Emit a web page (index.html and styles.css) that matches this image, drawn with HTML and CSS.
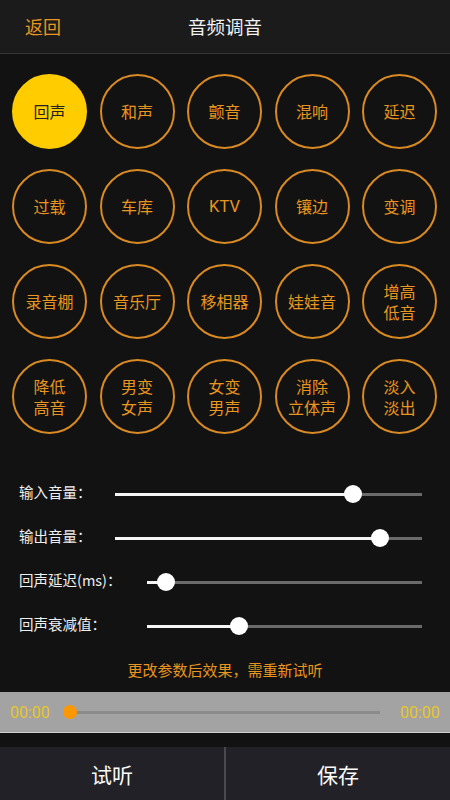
FILE: index.html
```html
<!DOCTYPE html>
<html lang="zh-CN">
<head>
<meta charset="utf-8">
<title>音频调音</title>
<link rel="stylesheet" href="styles.css">
</head>
<body>
<div class="app">
  <header class="topbar">
    <span class="back">返回</span>
    <span class="title">音频调音</span>
  </header>

  <section class="effects">
    <div class="fx active">回声</div>
    <div class="fx">和声</div>
    <div class="fx">颤音</div>
    <div class="fx">混响</div>
    <div class="fx">延迟</div>
    <div class="fx">过载</div>
    <div class="fx">车库</div>
    <div class="fx latin">KTV</div>
    <div class="fx">镶边</div>
    <div class="fx">变调</div>
    <div class="fx">录音棚</div>
    <div class="fx">音乐厅</div>
    <div class="fx">移相器</div>
    <div class="fx">娃娃音</div>
    <div class="fx two"><span>增高</span><span>低音</span></div>
    <div class="fx two"><span>降低</span><span>高音</span></div>
    <div class="fx two"><span>男变</span><span>女声</span></div>
    <div class="fx two"><span>女变</span><span>男声</span></div>
    <div class="fx two"><span>消除</span><span>立体声</span></div>
    <div class="fx two"><span>淡入</span><span>淡出</span></div>
  </section>

  <section class="sliders">
    <div class="row">
      <span class="label short">输入音量：</span>
      <div class="track"><div class="fill" style="width:77.5%"></div><span class="thumb" style="left:77.5%"></span></div>
    </div>
    <div class="row">
      <span class="label short">输出音量：</span>
      <div class="track"><div class="fill" style="width:86.3%"></div><span class="thumb" style="left:86.3%"></span></div>
    </div>
    <div class="row">
      <span class="label long">回声延迟(ms)：</span>
      <div class="track"><div class="fill" style="width:6.9%"></div><span class="thumb" style="left:6.9%"></span></div>
    </div>
    <div class="row">
      <span class="label long">回声衰减值：</span>
      <div class="track"><div class="fill" style="width:33.5%"></div><span class="thumb" style="left:33.5%"></span></div>
    </div>
  </section>

  <p class="hint">更改参数后效果，需重新试听</p>

  <section class="player">
    <span class="time">00:00</span>
    <div class="progress"><span class="dot"></span></div>
    <span class="time">00:00</span>
  </section>

  <div class="spacer"></div>

  <footer class="actions">
    <div class="btn">试听</div>
    <div class="divider"></div>
    <div class="btn">保存</div>
  </footer>
</div>
</body>
</html>
```

FILE: styles.css
```css
* { box-sizing: border-box; }
html, body { margin: 0; padding: 0; }
body {
  background: #121212;
  font-family: "Noto Sans CJK SC", "Noto Sans", sans-serif;
  color: #eee;
}
.app {
  width: 450px;
  height: 800px;
  display: flex;
  flex-direction: column;
  overflow: hidden;
}
.topbar {
  height: 54px;
  flex: none;
  background: #1b1b1b;
  border-bottom: 1px solid #363636;
  display: flex;
  align-items: center;
  justify-content: center;
  position: relative;
}
.back {
  position: absolute;
  left: 25px;
  top: 13px;
  font-size: 18px;
  line-height: 26px;
  color: #e8961f;
}
.title {
  font-size: 18.5px;
  color: #f2f2f2;
  line-height: 26px;
  margin-top: -2px;
}
.effects {
  flex: none;
  padding: 20px 13px 0 12px;
  display: grid;
  grid-template-columns: repeat(5, 75px);
  grid-auto-rows: 75px;
  column-gap: 12.5px;
  row-gap: 20px;
}
.fx {
  width: 75px;
  height: 75px;
  border-radius: 50%;
  border: 2px solid #d98a22;
  color: #e8961f;
  font-size: 16px;
  line-height: 21px;
  display: flex;
  flex-direction: column;
  align-items: center;
  justify-content: center;
  text-align: center;
}
.fx.two span {
  display: block;
  height: 21px;
  line-height: 21px;
  overflow: visible;
}
.fx.latin { font-family: "Roboto", "Noto Sans", sans-serif; font-size: 16.5px; }
.fx.active {
  background: #ffcc00;
  border-color: #ffcc00;
  color: #222;
}
.sliders {
  flex: none;
  margin-top: 38px;
  display: flex;
  flex-direction: column;
}
.row {
  height: 44px;
  display: flex;
  align-items: center;
  padding: 0 28px 0 19px;
}
.label {
  flex: none;
  font-size: 14.5px;
  color: #efefef;
  position: relative;
  top: -3px;
  white-space: nowrap;
}
.label.short { width: 96px; }
.label.long { width: 128px; }
.track {
  flex: 1;
  height: 3px;
  background: #6a6a6a;
  position: relative;
}
.fill {
  height: 100%;
  background: #f5f5f5;
}
.thumb {
  position: absolute;
  top: 50%;
  width: 18px;
  height: 18px;
  margin: -9px 0 0 -9px;
  border-radius: 50%;
  background: #fff;
}
.hint {
  flex: none;
  margin: 0;
  height: 44px;
  line-height: 44px;
  text-align: center;
  font-size: 15px;
  color: #e8961f;
}
.player {
  flex: none;
  height: 41px;
  background: #a3a3a3;
  border-bottom: 1px solid #cfcfcf;
  display: flex;
  align-items: center;
  padding: 0 10px;
}
.time {
  font-family: "Roboto", "Noto Sans", sans-serif;
  font-size: 16px;
  color: #e9c62a;
  width: 40px;
  white-space: nowrap;
}
.progress {
  flex: none;
  width: 310px;
  height: 3px;
  margin: 0 20px;
  background: #8b8b8b;
  position: relative;
}
.dot {
  position: absolute;
  left: -7px;
  top: -6px;
  width: 14px;
  height: 14px;
  border-radius: 50%;
  background: #ff9800;
}
.spacer { flex: 1; }
.actions {
  flex: none;
  height: 53px;
  background: #222127;
  display: flex;
}
.btn {
  flex: 1;
  display: flex;
  align-items: center;
  justify-content: center;
  font-size: 21px;
  color: #fafafa;
}
.divider {
  width: 2px;
  background: #4a4a4e;
}
```
